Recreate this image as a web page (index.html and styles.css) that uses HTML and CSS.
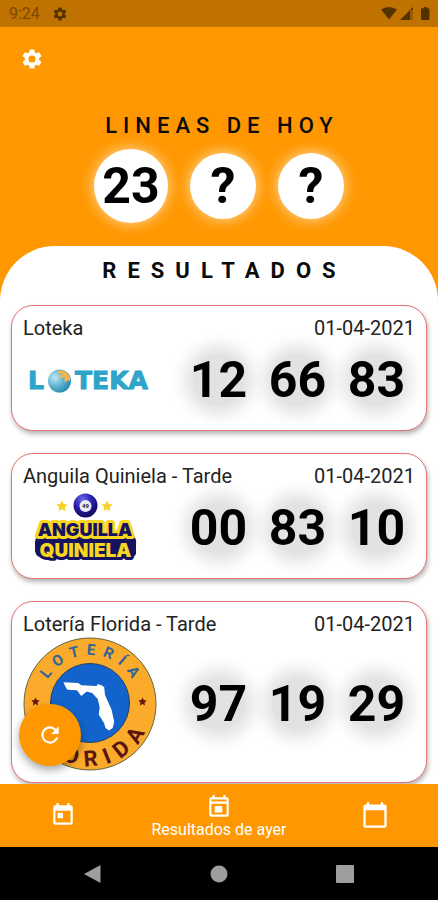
FILE: index.html
```html
<!DOCTYPE html>
<html lang="es">
<head>
<meta charset="utf-8">
<meta name="viewport" content="width=device-width, initial-scale=1">
<title>Resultados</title>
<link rel="stylesheet" href="styles.css">
</head>
<body>
<svg class="defs" aria-hidden="true">
  <symbol id="gear" viewBox="0 0 24 24"><path d="M19.14 12.94c.04-.3.06-.61.06-.94s-.02-.64-.07-.94l2.03-1.58a.49.49 0 0 0 .12-.61l-1.92-3.32a.49.49 0 0 0-.59-.22l-2.39.96a7 7 0 0 0-1.62-.94l-.36-2.54A.48.48 0 0 0 13.92 2.4h-3.84a.47.47 0 0 0-.47.41l-.36 2.54c-.59.24-1.13.57-1.62.94l-2.39-.96a.48.48 0 0 0-.59.22L2.74 8.87a.48.48 0 0 0 .12.61l2.03 1.58c-.05.3-.09.63-.09.94s.02.64.07.94l-2.03 1.58a.49.49 0 0 0-.12.61l1.92 3.32c.12.22.37.29.59.22l2.39-.96c.5.38 1.03.7 1.62.94l.36 2.54c.05.24.24.41.48.41h3.84c.24 0 .44-.17.47-.41l.36-2.54c.59-.24 1.13-.56 1.62-.94l2.39.96c.22.08.47 0 .59-.22l1.92-3.32a.47.47 0 0 0-.12-.61zM12 15.6A3.6 3.6 0 1 1 12 8.400a3.6 3.6 0 0 1 0 7.200z"/></symbol>
  <symbol id="star" viewBox="0 0 24 24"><path d="M12 1l3.4 7.2 7.8 1-5.700 5.400 1.400 7.800L12 18.600l-6.900 3.800 1.400-7.800L.8 9.200l7.800-1z"/></symbol>
</svg>

<div class="status">
  <span class="time">9:24</span>
  <svg class="status-gear" viewBox="0 0 24 24"><use href="#gear"/></svg>
  <svg class="status-icons" viewBox="0 0 50 16">
    <path d="M1 3.500Q9-1.500 17 3.500L9 13.500z"/>
    <path d="M20 14L33 1v3h-3v10z"/>
    <path class="faint" d="M30 4h3v10h-3z"/>
    <path d="M41 3.200q0-1 1-1h1Q44 1 45 1h1q1 0 2 1.200 1.500 0 1.500 1V13q0 1-1 1H42q-1 0-1-1z"/>
  </svg>
</div>

<main class="screen">
  <header class="hero">
    <button class="settings" aria-label="Ajustes"><svg viewBox="0 0 24 24"><use href="#gear"/></svg></button>
    <h1 class="hero-title">LINEAS DE HOY</h1>
    <div class="lines">
      <span class="line large">23</span>
      <span class="line">?</span>
      <span class="line">?</span>
    </div>
  </header>

  <section class="sheet">
    <h2 class="sheet-title">RESULTADOS</h2>
    <div class="cards">
      <article class="card">
        <div class="card-head"><h3>Loteka</h3><time datetime="2021-04-01">01-04-2021</time></div>
        <div class="card-body">
          <svg class="logo" viewBox="0 0 134 80" role="img" aria-label="Loteka">
            <defs><radialGradient id="globe" cx=".3" cy=".35" r=".75"><stop offset="0" stop-color="#c4e8f2"/><stop offset=".5" stop-color="#62b5d2"/><stop offset="1" stop-color="#2387b0"/></radialGradient></defs>
            <text class="loteka" x="5" y="49">L</text>
            <circle cx="36.500" cy="41" r="11.500" fill="url(#globe)"/>
            <path d="M34 31q6-2 10 2 4 4 3 8l-3-1-1 3-2-3 1-3-4 1-2-2 4-2-5-1z" fill="#f5b54a"/>
            <text class="loteka" x="52" y="49">TEKA</text>
          </svg>
          <div class="numbers"><span>12</span><span>66</span><span>83</span></div>
        </div>
      </article>

      <article class="card">
        <div class="card-head"><h3>Anguila Quiniela - Tarde</h3><time datetime="2021-04-01">01-04-2021</time></div>
        <div class="card-body">
          <svg class="logo" viewBox="0 0 134 80" role="img" aria-label="Anguilla Quiniela">
            <defs><radialGradient id="ball" cx=".38" cy=".25" r=".8"><stop offset="0" stop-color="#6c67ef"/><stop offset=".45" stop-color="#2a22b0"/><stop offset="1" stop-color="#0b0750"/></radialGradient></defs>
            <use href="#star" x="33" y="12" width="12" height="12" fill="#f6d32c"/>
            <use href="#star" x="78" y="12" width="12" height="12" fill="#f6d32c"/>
            <circle cx="62.500" cy="17.500" r="12" fill="url(#ball)"/>
            <circle cx="62.500" cy="18" r="6" fill="#e9e9f4"/>
            <text class="ball-number" x="62.500" y="20">49</text>
            <path d="M15 47h95q4 4 3 10v9q-2 4-8 4H21q-8 0-9-7v-9q0-4 3-7z" fill="#17125f"/>
            <text class="quiniela edge" x="62.500" y="69">QUINIELA</text>
            <text class="anguilla edge" x="62" y="48">ANGUILLA</text>
            <text class="anguilla" x="62" y="48">ANGUILLA</text>
            <text class="quiniela" x="62.500" y="69">QUINIELA</text>
          </svg>
          <div class="numbers"><span>00</span><span>83</span><span>10</span></div>
        </div>
      </article>

      <article class="card tall">
        <div class="card-head"><h3>Lotería Florida - Tarde</h3><time datetime="2021-04-01">01-04-2021</time></div>
        <div class="card-body">
          <svg class="logo" viewBox="0 0 134 136" role="img" aria-label="Lotería Florida">
            <defs>
              <path id="arc-top" d="M18 68a49 49 0 0 1 98 0"/>
              <path id="arc-bottom" d="M5 68a62 62 0 0 0 124 0"/>
            </defs>
            <circle cx="67" cy="68" r="66" fill="#fbab2c" stroke="#66643f"/>
            <circle cx="67" cy="67" r="39.500" fill="#1263cb" stroke="#263f68"/>
            <path d="M40.300 46.300L55.300 47l3 2.300 15.400.7 1-2 3 1 3.500 2 .8 8 6.700 15 2.500 12-1.500 6-3.700 2.500-3.500-2.500-1.500-5-5.300-8.500 1-7-2-8.500-5.500-6-5.500-1.500-5.400 4.500-4.300-5.700-9.500-.5-1.500-2z" fill="#fff"/>
            <use href="#star" x="8" y="61" width="9" height="9" fill="#681b12"/>
            <use href="#star" x="115" y="61" width="9" height="9" fill="#681b12"/>
            <text class="seal-top"><textPath href="#arc-top" startOffset="52%">LOTERÍA</textPath></text>
            <text class="seal-bottom"><textPath href="#arc-bottom" startOffset="52%">FLORIDA</textPath></text>
          </svg>
          <div class="numbers"><span>97</span><span>19</span><span>29</span></div>
        </div>
      </article>
    </div>
  </section>
  <button class="refresh" aria-label="Actualizar">
    <svg viewBox="0 0 24 24"><path d="M17.650 6.350A7.960 7.960 0 0 0 12 4a8 8 0 1 0 7.730 10h-2.080A6 6 0 1 1 12 6c1.660 0 3.140.69 4.220 1.780L13 11h7V4z"/></svg>
  </button>
</main>

<nav class="tabs">
  <button class="tab" aria-label="Resultados de hoy">
    <svg viewBox="0 0 24 24"><path fill-rule="evenodd" d="M19 3h-1V1h-2v2H8V1H6v2H5a2 2 0 0 0-2 2v14c0 1.100.9 2 2 2h14a2 2 0 0 0 2-2V5a2 2 0 0 0-2-2zm0 16H5V8h14zM7 10h5v5H7z"/></svg>
  </button>
  <button class="tab main">
    <svg viewBox="0 0 24 24"><path fill-rule="evenodd" d="M19 3h-1V1h-2v2H8V1H6v2H5a2 2 0 0 0-2 2v14c0 1.100.9 2 2 2h14a2 2 0 0 0 2-2V5a2 2 0 0 0-2-2zM5 5h14v2H5zm0 4h14v10H5zm3 2h7v6H8z"/></svg>
    <span>Resultados de ayer</span>
  </button>
  <button class="tab wide" aria-label="Calendario">
    <svg viewBox="0 0 24 24"><path fill-rule="evenodd" d="M20 3h-1V1h-2v2H7V1H5v2H4a2 2 0 0 0-2 2v16c0 1.100.9 2 2 2h16a2 2 0 0 0 2-2V5a2 2 0 0 0-2-2zm0 18H4V8h16z"/></svg>
  </button>
</nav>

<div class="system">
  <button aria-label="Atrás"><svg viewBox="0 0 18 18"><path d="M16.500 0v18L0 9z"/></svg></button>
  <button aria-label="Inicio"><svg viewBox="0 0 18 18"><circle cx="9" cy="9" r="8.500"/></svg></button>
  <button aria-label="Recientes"><svg viewBox="0 0 18 18"><rect width="18" height="18" rx="1"/></svg></button>
</div>
</body>
</html>
```
FILE: styles.css
```css
* { box-sizing: border-box; }

body {
  margin: 0;
  height: 100vh;
  display: flex;
  flex-direction: column;
  background: #ff9800;
  color: #0b0b0b;
  font-family: Roboto, "Liberation Sans", sans-serif;
}

h1, h2, h3 { margin: 0; }

button {
  padding: 0;
  border: 0;
  background: none;
  color: inherit;
  font: inherit;
  cursor: pointer;
}

svg { display: block; fill: currentColor; }
.defs { position: absolute; width: 0; height: 0; }

.status {
  flex: none;
  display: flex;
  align-items: center;
  height: 27px;
  padding: 0 8px 0 9px;
  background: #bf7200;
  color: #543200;
}
.time { font-size: 16px; color: #7a4900; }
.status-gear { width: 16px; height: 16px; margin-left: 12px; }
.status-icons { width: 50px; height: 16px; margin-left: auto; }
.faint { opacity: .35; }

.screen {
  flex: 1;
  min-height: 0;
  display: flex;
  flex-direction: column;
  position: relative;
}

.hero {
  flex: none;
  display: flex;
  flex-direction: column;
  align-items: center;
  padding: 20px 20px 23px;
}
.settings { align-self: flex-start; color: #fff; }
.settings svg { width: 24px; height: 24px; }
.hero-title, .sheet-title {
  font-size: 22px;
  line-height: 24px;
  font-weight: 500;
  text-align: center;
}
.hero-title { margin: 43px 0 11px; padding-left: 6px; letter-spacing: 6px; }

.lines { display: flex; align-items: center; gap: 22px; }
.line {
  display: flex;
  align-items: center;
  justify-content: center;
  width: 66px;
  height: 66px;
  border-radius: 50%;
  background: #fff;
  box-shadow: 0 0 14px 1px rgba(255, 255, 255, .6);
  color: #000;
  font-size: 50px;
  line-height: 50px;
  font-weight: 700;
}
.line.large { width: 74px; height: 74px; }

.sheet {
  flex: 1;
  min-height: 0;
  display: flex;
  flex-direction: column;
  padding-top: 13px;
  border-radius: 55px 55px 0 0;
  background: #fff;
}
.sheet-title { padding-left: 11px; letter-spacing: 11px; font-weight: 700; }

.cards {
  flex: 1;
  min-height: 0;
  display: flex;
  flex-direction: column;
  gap: 22px;
  margin-top: 19px;
  padding: 3px 11px 0;
  overflow-y: auto;
  scrollbar-width: none;
}
.card {
  flex: none;
  padding: 10px;
  border: 1px solid #e57373;
  border-radius: 22px;
  background: #fff;
  box-shadow: 1px 3px 5px rgba(0, 0, 0, .3);
}
.card-head {
  display: flex;
  justify-content: space-between;
  padding: 0 1px;
  line-height: 24px;
}
.card-head h3, .card-head time { font-size: 20px; font-weight: 400; color: #222; }
.card-body {
  display: flex;
  align-items: center;
  justify-content: space-between;
  height: 80px;
}
.tall .card-body { height: 136px; }
.logo { width: 134px; height: 100%; margin-left: 1px; }

.numbers { display: grid; grid-template-columns: repeat(3, 79px); }
.numbers span {
  justify-self: center;
  display: flex;
  align-items: center;
  justify-content: center;
  width: 52px;
  height: 52px;
  border-radius: 50%;
  background: #e2e2e2;
  box-shadow: 0 0 16px 9px #e2e2e2;
  color: #000;
  font-size: 50px;
  line-height: 50px;
  font-weight: 700;
}

.loteka {
  font: 700 25px "DejaVu Sans", sans-serif;
  fill: #2da4c8;
  stroke: #2da4c8;
}
.anguilla, .quiniela {
  font-family: Inter, sans-serif;
  font-weight: 900;
  text-anchor: middle;
  stroke-linejoin: round;
}
.anguilla { font-size: 18px; fill: #17125f; }
.quiniela { font-size: 19px; fill: #f8d51f; }
.anguilla.edge { fill: #f8d51f; stroke: #f8d51f; stroke-width: 6px; }
.quiniela.edge { stroke: #17125f; stroke-width: 6px; }
.ball-number { font: 700 6px Roboto, sans-serif; text-anchor: middle; fill: #222; }
.seal-top, .seal-bottom { font-family: Roboto, sans-serif; font-weight: 700; text-anchor: middle; }
.seal-top { font-size: 15px; letter-spacing: 7px; fill: #31649a; }
.seal-bottom { font-size: 22px; letter-spacing: 8px; fill: #5a1510; }

.refresh {
  position: absolute;
  left: 19px;
  bottom: 18px;
  display: flex;
  align-items: center;
  justify-content: center;
  width: 62px;
  height: 62px;
  border-radius: 50%;
  background: #ff9800;
  box-shadow: 0 4px 8px rgba(0, 0, 0, .35);
  color: #fff;
}
.refresh svg { width: 26px; height: 26px; }

.tabs {
  flex: none;
  display: grid;
  grid-template-columns: 2fr 3fr 2fr;
  height: 63px;
  background: #ff9800;
  color: #fff;
}
.tab {
  display: flex;
  flex-direction: column;
  align-items: center;
  justify-content: center;
  padding-bottom: 2px;
  font-size: 16px;
  line-height: 20px;
}
.tab.main { padding: 2px 0 0; }
.tab svg { width: 26px; height: 26px; }
.tab.wide svg { width: 28px; height: 28px; }

.system {
  flex: none;
  display: flex;
  align-items: center;
  justify-content: center;
  gap: 108px;
  height: 53px;
  background: #000;
  color: #9e9e9e;
}
.system svg { width: 18px; height: 18px; }
```
